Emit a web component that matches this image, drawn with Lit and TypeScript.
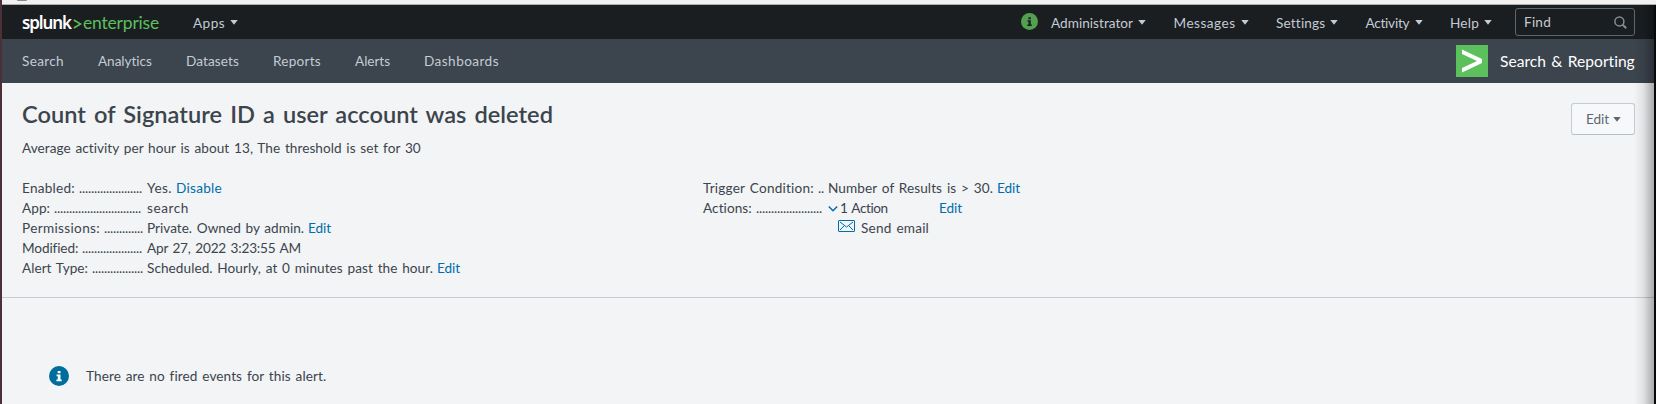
import { LitElement, html, css, nothing } from "lit";
import { customElement, property } from "lit/decorators.js";

/* A run of text tracked to occupy a given width. */
@customElement("fit-text")
class FitText extends LitElement {
  @property({ type: Number }) w = 0;
  @property() text = "";
  static styles = css`
    :host { display: inline-block; white-space: pre; flex: none; }
    .run { display: inline-block; word-spacing: 0.09em; }
  `;
  render() {
    return html`<span class="run">${this.text}</span>`;
  }
  updated() {
    const run = this.renderRoot.querySelector(".run") as HTMLElement;
    run.style.letterSpacing = "0px";
    const natural = run.getBoundingClientRect().width;
    run.style.letterSpacing = `${(this.w - natural) / this.text.length}px`;
    this.style.width = `${this.w}px`;
  }
}

const fit = (text: string, w: number, cls = "") =>
  html`<fit-text class=${cls} .text=${text} .w=${w}></fit-text>`;

const caret = html`<svg class="caret" width="8" height="5" viewBox="0 0 8 5"><path d="M.3 0h7.4L4 4.8z" fill="currentColor"/></svg>`;

const infoIcon = (size: number, cls: string) => html`<svg class=${cls} width=${size} height=${size} viewBox="0 0 20 20">
  <circle cx="10" cy="10" r="10" fill="currentColor"/>
  <path class="mark" d="M8.7 5.1h2.8v2.2H8.7zM7.6 8.5h3.9v5h1.2v1.7H7.4v-1.7h1.4v-3.3H7.6z"/>
</svg>`;

interface Field { label: string; lw: number; dots: number; value: string; vw: number; link?: string; kw?: number }

const leftFields: Field[] = [
  { label: "Enabled:", lw: 53, dots: 21, value: "Yes.", vw: 25, link: "Disable", kw: 46 },
  { label: "App:", lw: 28, dots: 29, value: "search", vw: 42 },
  { label: "Permissions:", lw: 78, dots: 13, value: "Private. Owned by admin.", vw: 157, link: "Edit", kw: 23 },
  { label: "Modified:", lw: 56, dots: 20, value: "Apr 27, 2022 3:23:55 AM", vw: 154 },
  { label: "Alert Type:", lw: 66, dots: 17, value: "Scheduled. Hourly, at 0 minutes past the hour.", vw: 286, link: "Edit", kw: 23 },
];

const label = (text: string, w: number, dots: number) =>
  html`<span class="label">${fit(text, w)}${fit(".".repeat(dots), dots * 3, "dots")}</span>`;

const field = (f: Field) => html`<div class="field">
  ${label(f.label, f.lw, f.dots)}${fit(f.value, f.vw)}${f.link ? html`<a class="link">${fit(f.link, f.kw!)}</a>` : nothing}
</div>`;

@customElement("app-root")
class AppRoot extends LitElement {
  static styles = css`
    :host { display: block; font: 13.6px/20px Lato, sans-serif; color: #3c444d; }
    * { box-sizing: border-box; }
    svg { display: block; flex: none; }
    .frame { position: relative; height: 404px; overflow: hidden; background: #f2f4f5; border-left: 2px solid #4b3037; }
    .shade { position: absolute; top: 5px; right: 0; bottom: 0; width: 22px; border-right: 2px solid #08090a;
      background: linear-gradient(90deg, rgba(0,0,0,0), rgba(0,0,0,.07) 45%, rgba(0,0,0,.3)); }
    .strip { height: 5px; background: #f3f1ef; border-bottom: 1px solid #b1afac; padding-left: 15px; }
    .nub { width: 10px; height: 1px; background: #8c8a88; border-radius: 0 0 4px 4px; }
    .bar { display: flex; align-items: center; height: 34px; padding: 1px 21px 0 20px; background: #1a1e21; color: #c3cbd4; }
    .brand { display: flex; align-items: center; width: 137px; margin-right: 34px; font: 18px/24px "Noto Sans", sans-serif; color: #5cc05c; }
    .brand .s { color: #fff; font-weight: 600; font-size: 17px; margin-right: 1px; }
    .brand .e { font: 17.5px/24px Lato, sans-serif; }
    .brand svg { margin: 2px 1px 0 1px; }
    .menu { display: flex; align-items: center; gap: 5px; }
    .right { display: flex; align-items: center; margin-left: auto; }
    .status { color: #53a051; margin: -3px 13px 0 0; }
    .status .mark { fill: #1a1e22; }
    .right .menu { margin-right: 27.5px; }
    .right .menu:nth-of-type(5) { margin-right: 23px; }
    .find { display: flex; align-items: center; justify-content: space-between; width: 120px; height: 28px; padding: 0 7px 0 8px; border: 1px solid #5c6773; border-radius: 3px; margin-top: -1px; }
    .glass { color: #818d99; }
    .nav { display: flex; align-items: center; gap: 34px; height: 44px; padding: 0 21px 0 20px; background: #3c444d; color: #c3cbd4; }
    .app { display: flex; align-items: center; gap: 12px; margin-left: auto; font-size: 15.6px; color: #fff; }
    .head { display: flex; justify-content: space-between; padding: 13px 21px 0 20px; height: 95px; }
    h1 { margin: 0; font-size: 23.6px; line-height: 36px; font-weight: 600; }
    .desc { margin-top: 6px; }
    .button { display: flex; align-items: center; gap: 4px; width: 64px; height: 32px; margin-top: 7px; padding-left: 14px; border: 1px solid #c3cbd4; border-bottom-color: #b5bfc9; border-radius: 3px; background: #f7f8fa; color: #5c6773; }
    .details { display: grid; grid-template-columns: 681px 1fr; height: 120px; padding-left: 20px; border-bottom: 1px solid #c3cbd4; }
    .field { display: flex; height: 20px; }
    .label { display: flex; gap: 4px; width: 125px; }
    .link { margin-left: 4px; color: #006eaa; }
    .action { margin-left: 51px; }
    .chev { margin: 7px 2px 0 0; color: #006eaa; }
    .mail { margin: 2px 6px 0 135px; color: #006eaa; }
    .empty { display: flex; align-items: center; gap: 17px; padding: 68px 0 0 47px; }
    .notice { color: #006d9c; }
    .notice .mark { fill: #fff; }
  `;

  render() {
    const menu = (t: string, w: number) => html`<div class="menu">${fit(t, w)}${caret}</div>`;
    return html`<div class="frame">
      <div class="strip"><div class="nub"></div></div>
      <div class="bar">
        <div class="brand">${fit("splunk", 49, "s")}<svg width="9" height="10" viewBox="0 0 9 10"><path d="M.8 1L7.6 5 .8 9" fill="none" stroke="currentColor" stroke-width="1.5"/></svg>${fit("enterprise", 76, "e")}</div>
        ${menu("Apps", 32)}
        <div class="right">
          ${infoIcon(17, "status")}
          ${menu("Administrator", 82)}${menu("Messages", 62)}${menu("Settings", 49)}${menu("Activity", 44)}${menu("Help", 29)}
          <div class="find">${fit("Find", 27)}<svg class="glass" width="13" height="13" viewBox="0 0 13 13" fill="none" stroke="currentColor"><circle cx="5.4" cy="5.4" r="4.5" stroke-width="1.5"/><path d="M8.7 8.7l3.5 3.5" stroke-width="2"/></svg></div>
        </div>
      </div>
      <div class="nav">
        ${fit("Search", 42)}${fit("Analytics", 54)}${fit("Datasets", 53)}${fit("Reports", 48)}${fit("Alerts", 35)}${fit("Dashboards", 75)}
        <div class="app">
          <svg width="32" height="32" viewBox="0 0 32 32"><path fill="#5cc05c" d="M0 0h32v32H0z"/><path fill="#fff" d="M6 4.6L26 14v4L6 27.4v-4.3L21 16 6 8.9z"/></svg>
          ${fit("Search & Reporting", 135)}
        </div>
      </div>
      <div class="head">
        <div>
          <h1>${fit("Count of Signature ID a user account was deleted", 531)}</h1>
          <div class="desc">${fit("Average activity per hour is about 13, The threshold is set for 30", 399)}</div>
        </div>
        <div class="button">${fit("Edit", 23)}${caret}</div>
      </div>
      <div class="details">
        <div>${leftFields.map(field)}</div>
        <div>
          ${field({ label: "Trigger Condition:", lw: 111, dots: 2, value: "Number of Results is > 30.", vw: 165, link: "Edit", kw: 23 })}
          <div class="field">${label("Actions:", 49, 22)}<svg class="chev" width="10" height="8" viewBox="0 0 10 8"><path d="M.8 1.5L5 5.7l4.2-4.2" fill="none" stroke="currentColor" stroke-width="1.5"/></svg>${fit("1 Action", 48)}<a class="link action">${fit("Edit", 23)}</a></div>
          <div class="field"><svg class="mail" width="17" height="12" viewBox="0 0 17 12" fill="none" stroke="currentColor"><rect x=".5" y=".5" width="16" height="11" rx=".5"/><path d="M2 2l6.5 5L15 2M2 10l4-4M15 10l-4-4"/></svg>${fit("Send email", 68)}</div>
        </div>
      </div>
      <div class="empty">${infoIcon(20, "notice")}${fit("There are no fired events for this alert.", 240)}</div>
      <div class="shade"></div>
    </div>`;
  }
}
